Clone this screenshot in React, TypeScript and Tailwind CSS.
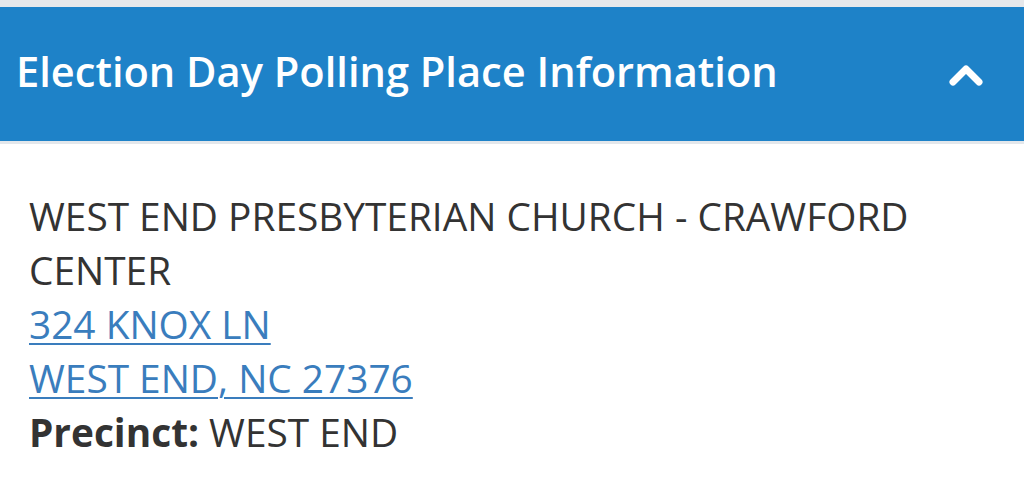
export default function App() {
  return (
    <div className="min-h-screen bg-white" style={{ fontFamily: '"Open Sans", sans-serif' }}>
      <div className="h-[7px] bg-[#e6e8eb]" />
      <div className="flex h-[134px] items-center justify-between bg-[#1e82c8] pl-4 pr-10">
        <h2 className="-mt-1 text-[41.6px] font-semibold leading-none text-white">Election Day Polling Place Information</h2>
        <svg width="34" height="23" viewBox="0 0 34 23" fill="none" className="mr-[1px]">
          <path d="M4 19 L17 6 L30 19" stroke="white" strokeWidth="7" strokeLinecap="round" strokeLinejoin="round" />
        </svg>
      </div>
      <div className="h-[3px] bg-[#e3e7eb]" />
      <div className="pl-[29px] pr-8 pt-[45px] text-[38.8px] leading-[54px] text-[#333333]">
        <p>WEST END PRESBYTERIAN CHURCH - CRAWFORD CENTER</p>
        <a href="#" className="block w-fit text-[#3a7dbd] underline decoration-2 underline-offset-4">
          324 KNOX LN
        </a>
        <a href="#" className="block w-fit text-[#3a7dbd] underline decoration-2 underline-offset-4">
          WEST END, NC 27376
        </a>
        <p>
          <span className="font-bold">Precinct:</span> WEST END
        </p>
      </div>
    </div>
  )
}
